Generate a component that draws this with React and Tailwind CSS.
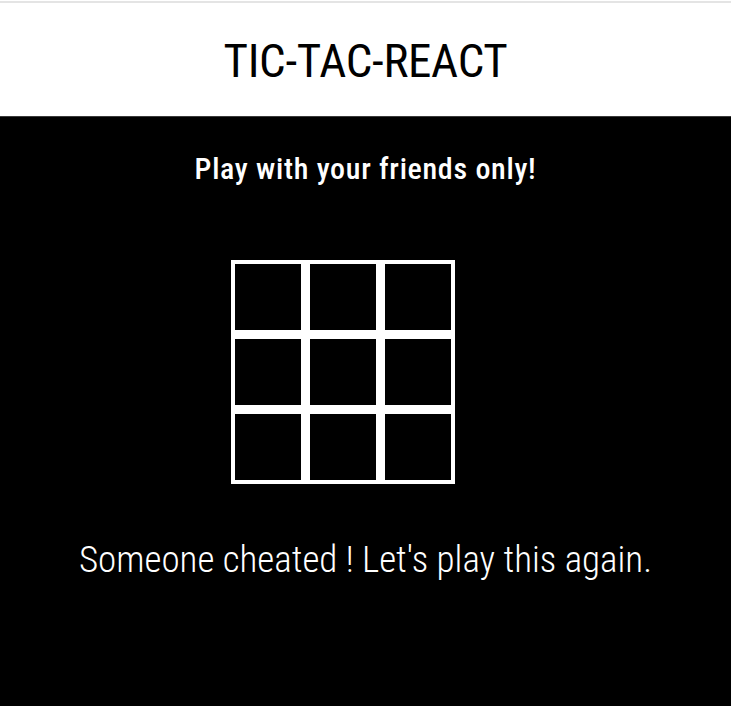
export default function App() {
  const cells = Array.from({ length: 9 });
  return (
    <div className="min-h-[706px] flex flex-col bg-black" style={{ fontFamily: '"Roboto Condensed", "Liberation Sans Narrow", sans-serif' }}>
      <div className="h-[1px] bg-white" />
      <div className="h-[2px] bg-[#e4e4e4]" />
      <header className="h-[113px] bg-white flex items-center justify-center">
        <h1 className="text-[47px] leading-none text-black tracking-[-0.3px] pt-[2px]">TIC-TAC-REACT</h1>
      </header>
      <div className="h-[1px] bg-[#3a3a3a]" />
      <main className="flex-1 flex flex-col items-center text-white">
        <p className="mt-[36px] text-[30px] leading-[32px] font-medium tracking-[0.7px]">Play with your friends only!</p>
        <div className="mt-[75px] mr-[45px] bg-white p-[4px] grid grid-cols-3 gap-[9px]">
          {cells.map((_, i) => (
            <div key={i} className="w-[66px] h-[66px] bg-black" />
          ))}
        </div>
        <p className="mt-[54px] text-[37px] leading-[44px] font-light">Someone cheated ! Let's play this again.</p>
      </main>
    </div>
  );
}
